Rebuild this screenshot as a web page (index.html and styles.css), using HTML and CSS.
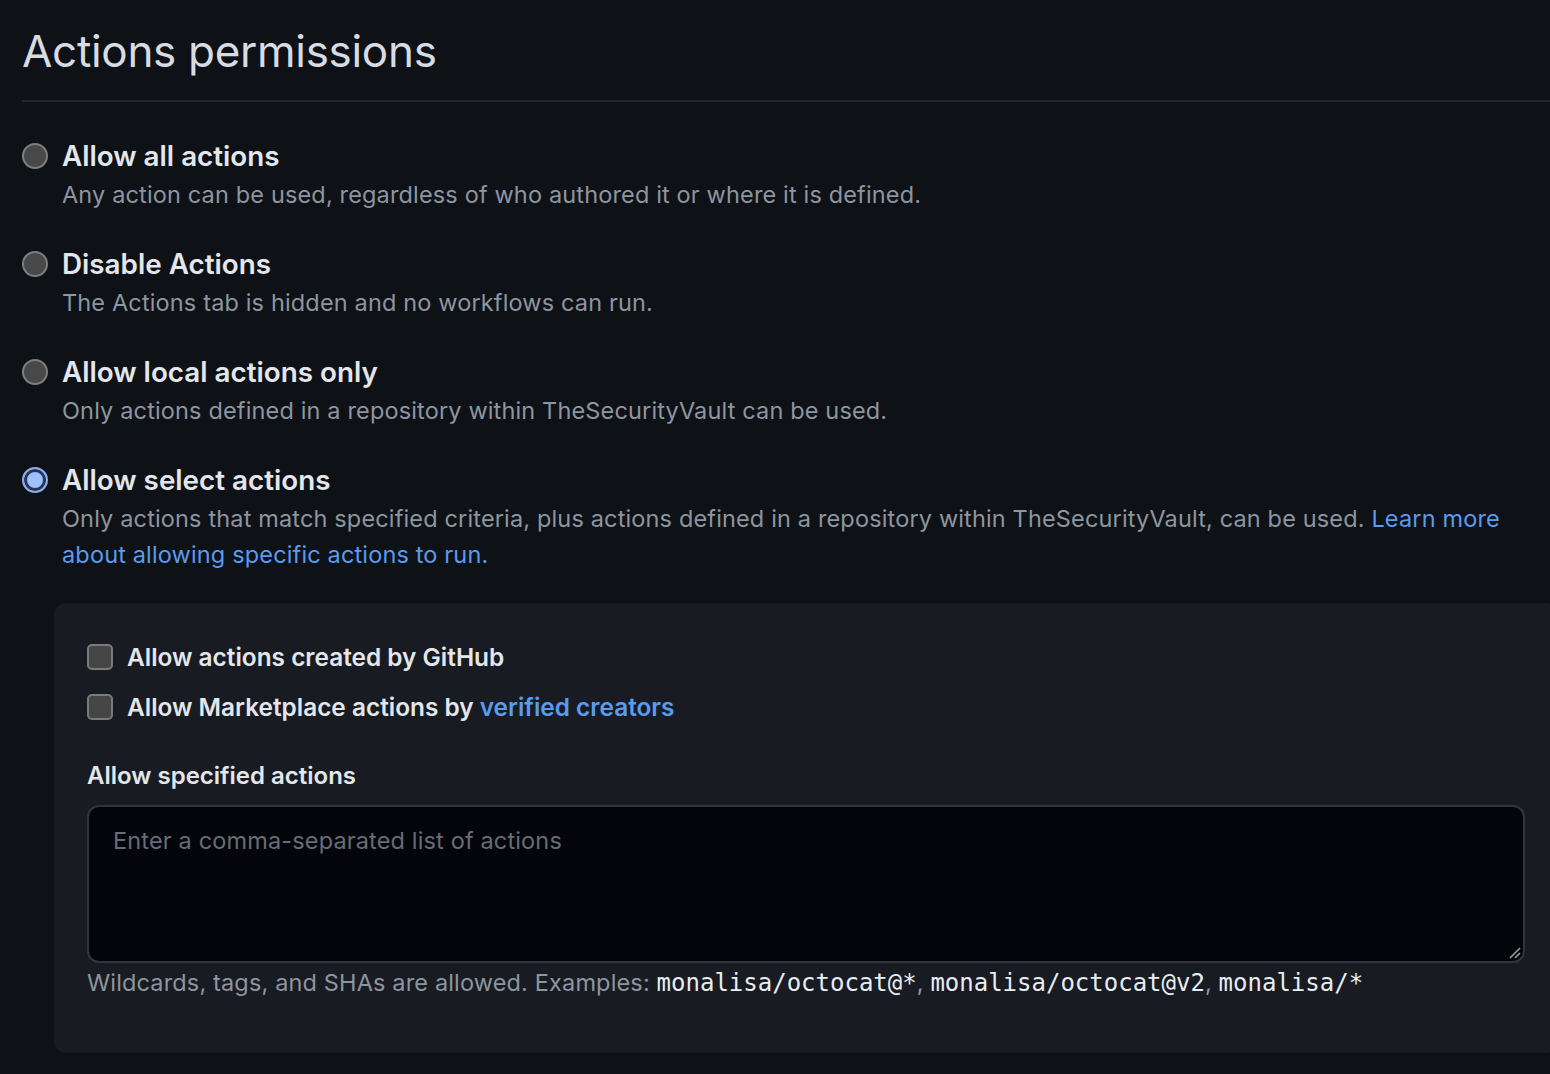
FILE: index.html
```html
<!DOCTYPE html>
<html lang="en">
<head>
<meta charset="utf-8">
<title>Actions permissions</title>
<link rel="stylesheet" href="styles.css">
</head>
<body>
<div class="page">
  <h2 class="subhead">Actions permissions</h2>

  <div class="option">
    <span class="radio"></span>
    <div class="option-body">
      <div class="label">Allow all actions</div>
      <div class="note">Any action can be used, regardless of who authored it or where it is defined.</div>
    </div>
  </div>

  <div class="option">
    <span class="radio"></span>
    <div class="option-body">
      <div class="label">Disable Actions</div>
      <div class="note">The Actions tab is hidden and no workflows can run.</div>
    </div>
  </div>

  <div class="option">
    <span class="radio"></span>
    <div class="option-body">
      <div class="label">Allow local actions only</div>
      <div class="note">Only actions defined in a repository within TheSecurityVault can be used.</div>
    </div>
  </div>

  <div class="option">
    <span class="radio checked"></span>
    <div class="option-body">
      <div class="label">Allow select actions</div>
      <div class="note">Only actions that match specified criteria, plus actions defined in a repository within TheSecurityVault, can be used. <a href="#" class="link">Learn more about allowing specific actions to run.</a></div>
    </div>
  </div>

  <div class="box">
    <div class="check-row">
      <span class="checkbox"></span>
      <span class="check-label">Allow actions created by GitHub</span>
    </div>
    <div class="check-row">
      <span class="checkbox"></span>
      <span class="check-label">Allow Marketplace actions by <a href="#" class="link">verified creators</a></span>
    </div>
    <div class="field-label">Allow specified actions</div>
    <div class="textarea">
      <span class="placeholder">Enter a comma-separated list of actions</span>
      <svg class="grip" width="14" height="14" viewBox="0 0 14 14"><path d="M13 3 L3 13 M13 8 L8 13" stroke="#9a9a9a" stroke-width="1.6" fill="none"/></svg>
    </div>
    <div class="hint">Wildcards, tags, and SHAs are allowed. Examples: <code>monalisa/octocat@*</code>, <code>monalisa/octocat@v2</code>, <code>monalisa/*</code></div>
  </div>
</div>
</body>
</html>
```

FILE: styles.css
```css
html, body {
  margin: 0;
  padding: 0;
  background: #0e1116;
  overflow: hidden;
}
body {
  font-family: Inter, "Noto Sans", "Liberation Sans", sans-serif;
  color: #e6edf3;
  width: 1550px;
  height: 1074px;
}
.page {
  width: 1536px;
  padding-left: 22px;
}
.subhead {
  margin: 0;
  padding-top: 15px;
  padding-bottom: 13px;
  font-size: 44px;
  font-weight: 400;
  line-height: 72px;
  color: #d7dce3;
  border-bottom: 2px solid #22262d;
  letter-spacing: -0.3px;
}
.option {
  display: flex;
  margin-top: 33px;
}
.option + .option {
  margin-top: 30px;
}
.radio {
  flex: none;
  width: 26px;
  height: 26px;
  box-sizing: border-box;
  border-radius: 50%;
  background: #484848;
  border: 2px solid #7e7e7e;
  margin-top: 8px;
  margin-right: 14px;
}
.radio.checked {
  background: #9dc0ff;
  border: 2px solid #88aef0;
  box-shadow: inset 0 0 0 3px #2a3550, inset 0 0 0 4px #9dc0ff;
}
.label {
  font-size: 27.8px;
  font-weight: 600;
  line-height: 42px;
  color: #e3e7ec;
}
.check-label {
  font-size: 24.4px;
  font-weight: 600;
  line-height: 42px;
  color: #e3e7ec;
}
.note {
  font-size: 23.5px;
  line-height: 36px;
  color: #8d96a0;
  letter-spacing: 0.15px;
}
.link {
  color: #589cf0;
  text-decoration: none;
}
.box {
  margin-top: 30px;
  margin-left: 32px;
  background: #181b22;
  border-radius: 12px;
  padding: 33px 33px 52px 33px;
}
.check-row {
  display: flex;
  align-items: center;
  height: 42px;
  margin-bottom: 8px;
}
.checkbox {
  flex: none;
  width: 26px;
  height: 26px;
  box-sizing: border-box;
  border-radius: 5px;
  background: #454545;
  border: 2px solid #7a7a7a;
  margin-right: 14px;
}
.field-label {
  margin-top: 30px;
  font-size: 24px;
  font-weight: 600;
  line-height: 36px;
  color: #e3e7ec;
  margin-bottom: 11px;
}
.textarea {
  position: relative;
  height: 158px;
  box-sizing: border-box;
  background: #03050a;
  border: 2px solid #30363d;
  border-radius: 12px;
  padding: 16px 24px;
}
.placeholder {
  font-size: 23.5px;
  line-height: 36px;
  color: #666d76;
  letter-spacing: 0.15px;
}
.grip {
  position: absolute;
  right: 2px;
  bottom: 2px;
}
.hint {
  margin-top: 2px;
  font-size: 23.5px;
  line-height: 36px;
  color: #8d96a0;
  letter-spacing: 0.15px;
}
.hint code {
  font-family: "DejaVu Sans Mono", "Liberation Mono", monospace;
  font-size: 24px;
  color: #e6edf3;
  letter-spacing: 0;
}
```
